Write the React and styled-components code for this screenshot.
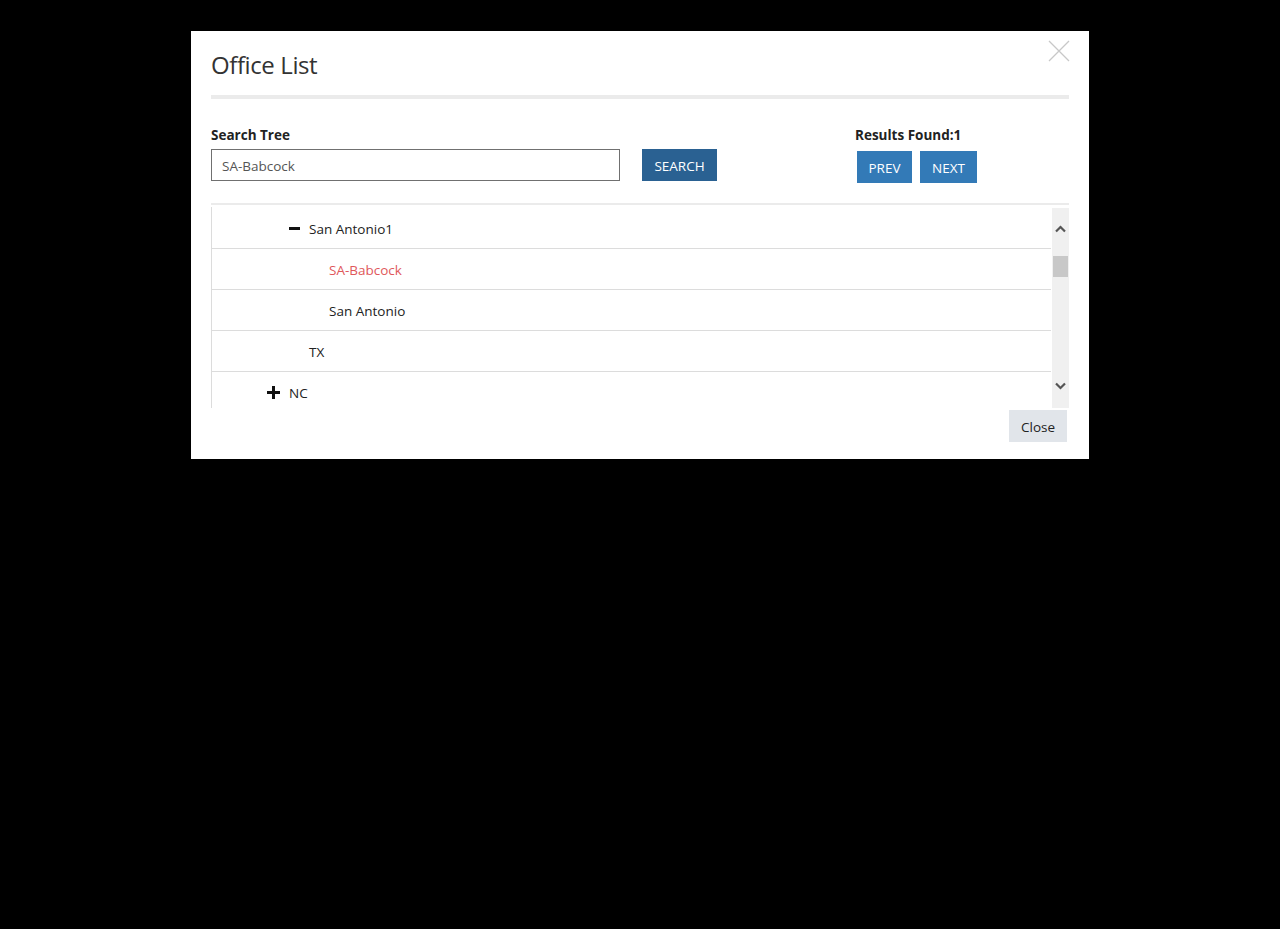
import React from "react";
import styled, { createGlobalStyle } from "styled-components";

const GlobalStyle = createGlobalStyle`
  html, body {
    margin: 0;
    padding: 0;
    background: #000;
    font-family: "Open Sans", "Noto Sans", sans-serif;
    font-size: 14px;
    color: #222;
  }
`;

const Overlay = styled.div`
  min-height: 929px;
  display: flex;
  justify-content: center;
  align-items: flex-start;
  padding-top: 31px;
  box-sizing: border-box;
`;

const Modal = styled.div`
  position: relative;
  width: 898px;
  background: #fff;
  padding: 0 20px 17px;
  box-sizing: border-box;
`;

const Header = styled.div`
  height: 64px;
  border-bottom: 4px solid #ebebeb;
  display: flex;
  align-items: flex-start;
`;

const Title = styled.h4`
  margin: 19px 0 0;
  font-size: 24px;
  font-weight: 400;
  line-height: 30px;
  color: #333;
  letter-spacing: -0.4px;
`;

const CloseX = styled.button`
  position: absolute;
  top: 9px;
  right: 19px;
  width: 22px;
  height: 22px;
  padding: 0;
  border: none;
  background: none;
  cursor: pointer;
`;

const SearchArea = styled.div`
  display: flex;
  align-items: flex-start;
  padding: 26px 0 20px;
  border-bottom: 2px solid #ebebeb;
`;

const SearchCol = styled.div`
  display: flex;
  flex-direction: column;
`;

const Label = styled.label`
  font-weight: 700;
  font-size: 13.5px;
  line-height: 20px;
  margin-bottom: 4px;
  color: #222;
`;

const SearchRow = styled.div`
  display: flex;
  gap: 22px;
`;

const Input = styled.input`
  width: 409px;
  height: 32px;
  box-sizing: border-box;
  border: 1px solid #707070;
  padding: 1px 10px 0;
  font-family: inherit;
  font-size: 13.5px;
  color: #555;
  outline: none;
`;

const Button = styled.button`
  height: 32px;
  width: ${(p) => p.$w}px;
  padding: 1px 0 0;
  border: none;
  background: ${(p) => p.$bg || "#337ab7"};
  color: ${(p) => p.$color || "#fff"};
  font-family: inherit;
  font-size: 13.5px;
  cursor: pointer;
`;

const ResultsCol = styled.div`
  margin-left: auto;
  width: 214px;
  display: flex;
  flex-direction: column;
`;

const NavRow = styled.div`
  display: flex;
  gap: 8px;
  padding: 2px 0 0 2px;
`;

const TreeBox = styled.div`
  display: flex;
  margin-top: 2px;
  height: 201px;
  border-left: 1px solid #dcdcdc;
  overflow: hidden;
`;

const TreeList = styled.ul`
  flex: 1;
  list-style: none;
  margin: 1px 0 0;
  padding: 0;
`;

const Row = styled.li`
  height: 40px;
  box-sizing: content-box;
  border-bottom: 1px solid #dcdcdc;
  display: flex;
  align-items: center;
  padding-left: ${(p) => 57 + p.$level * 20}px;
  color: ${(p) => (p.$hit ? "#e0575b" : "#222")};
  font-size: 13.5px;
`;

const RowText = styled.span`
  padding-top: 2px;
`;

const Toggle = styled.span`
  width: 20px;
  flex-shrink: 0;
  display: flex;
  align-items: center;
`;

const Scrollbar = styled.div`
  width: 17px;
  margin-left: 1px;
  background: #f0f0f0;
  display: flex;
  flex-direction: column;
  align-items: center;
  height: 200px;
  margin-top: 1px;
`;

const Arrow = styled.div`
  height: 17px;
  width: 17px;
  display: flex;
  align-items: center;
  justify-content: center;
  margin-top: ${(p) => (p.$down ? "auto" : "12px")};
  margin-bottom: ${(p) => (p.$down ? "14px" : "0")};
`;

const Thumb = styled.div`
  width: 15px;
  height: 21px;
  background: #c8c8c8;
  margin-top: 19px;
`;

const Footer = styled.div`
  display: flex;
  justify-content: flex-end;
  padding: 2px 2px 0 0;
`;

const Minus = () => (
  <svg width="12" height="12" viewBox="0 0 12 12">
    <rect x="0" y="5" width="11" height="3" fill="#111" />
  </svg>
);

const Plus = () => (
  <svg width="13" height="13" viewBox="0 0 13 13" style={{ marginLeft: -2 }}>
    <rect x="0" y="5" width="13" height="3" fill="#111" />
    <rect x="5" y="0" width="3" height="13" fill="#111" />
  </svg>
);

const rows = [
  { label: "San Antonio1", level: 1, icon: "minus" },
  { label: "SA-Babcock", level: 2, hit: true },
  { label: "San Antonio", level: 2 },
  { label: "TX", level: 1 },
  { label: "NC", level: 0, icon: "plus" },
];

export default function App() {
  return (
    <>
      <GlobalStyle />
      <Overlay>
        <Modal>
          <CloseX aria-label="close">
            <svg width="22" height="22" viewBox="0 0 22 22">
              <path d="M1 1L21 21M21 1L1 21" stroke="#c8c8c8" strokeWidth="1.3" />
            </svg>
          </CloseX>
          <Header>
            <Title>Office List</Title>
          </Header>
          <SearchArea>
            <SearchCol>
              <Label>Search Tree</Label>
              <SearchRow>
                <Input defaultValue="SA-Babcock" />
                <Button $bg="#2a6192" $w={75}>SEARCH</Button>
              </SearchRow>
            </SearchCol>
            <ResultsCol>
              <Label>Results Found:1</Label>
              <NavRow>
                <Button $w={55}>PREV</Button>
                <Button $w={57}>NEXT</Button>
              </NavRow>
            </ResultsCol>
          </SearchArea>
          <TreeBox>
            <TreeList>
              {rows.map((r) => (
                <Row key={r.label} $level={r.level} $hit={r.hit}>
                  <Toggle>
                    {r.icon === "minus" && <Minus />}
                    {r.icon === "plus" && <Plus />}
                  </Toggle>
                  <RowText>{r.label}</RowText>
                </Row>
              ))}
            </TreeList>
            <Scrollbar>
              <Arrow>
                <svg width="11" height="8" viewBox="0 0 11 8">
                  <path d="M1 6.5L5.5 2L10 6.5" stroke="#555" strokeWidth="2.2" fill="none" />
                </svg>
              </Arrow>
              <Thumb />
              <Arrow $down>
                <svg width="11" height="8" viewBox="0 0 11 8">
                  <path d="M1 1.5L5.5 6L10 1.5" stroke="#555" strokeWidth="2.2" fill="none" />
                </svg>
              </Arrow>
            </Scrollbar>
          </TreeBox>
          <Footer>
            <Button $bg="#e1e5ea" $color="#222" $w={58}>Close</Button>
          </Footer>
        </Modal>
      </Overlay>
    </>
  );
}
